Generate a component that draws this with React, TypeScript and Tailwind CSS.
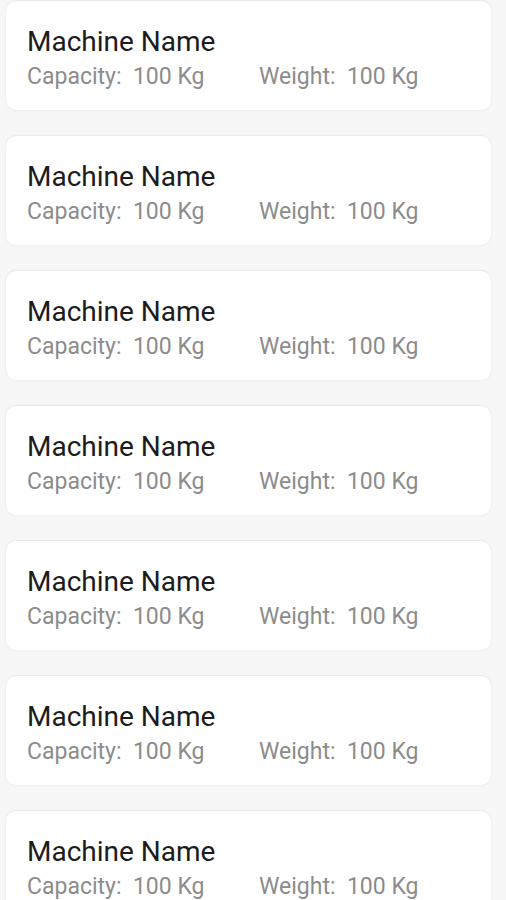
const machines = Array.from({ length: 7 }, (_, i) => ({
  id: i,
  name: 'Machine Name',
  capacity: '100 Kg',
  weight: '100 Kg'
}));

function MachineCard({ name, capacity, weight }: { name: string; capacity: string; weight: string }) {
  return (
    <div className="h-[109px] rounded-[10px] bg-white pl-[21px] pt-[25px] shadow-[0_-1px_2px_rgba(0,0,0,0.06),0_1px_3px_rgba(0,0,0,0.04)]">
      <h3 className="text-[28px] leading-[32px] text-[#1c1c1c]">{name}</h3>
      <div className="mt-[7px] flex text-[23px] leading-[24px] text-[#8c8c8c]">
        <span className="w-[232px]">
          Capacity:&nbsp; {capacity}
        </span>
        <span>
          Weight:&nbsp; {weight}
        </span>
      </div>
    </div>
  );
}

export default function App() {
  return (
    <div
      className="min-h-[900px] overflow-hidden bg-[#f7f7f7] pl-[6px] pr-[15px] pt-[1px]"
      style={{ fontFamily: 'Roboto, "Noto Sans", sans-serif' }}
    >
      <div className="flex flex-col gap-[26px]">
        {machines.map((m) => (
          <MachineCard key={m.id} name={m.name} capacity={m.capacity} weight={m.weight} />
        ))}
      </div>
    </div>
  );
}
